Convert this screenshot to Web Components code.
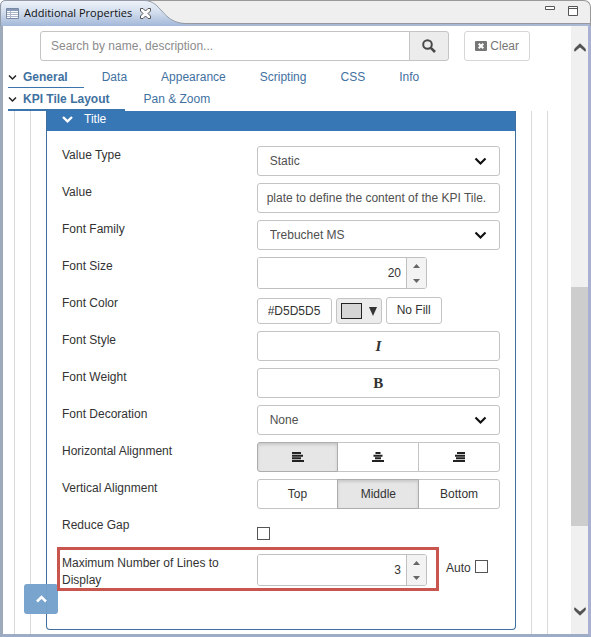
<!DOCTYPE html>
<html lang="en">
<head>
<meta charset="utf-8">
<title>Additional Properties</title>
<style>
  body { margin: 0; font: 12px/17px "Liberation Sans", Arial, sans-serif; color: #333; background: #fff; }
</style>
</head>
<body>
<view-frame heading="Additional Properties">
  <search-bar></search-bar>
  <tab-row tabs="General,Data,Appearance,Scripting,CSS,Info"></tab-row>
  <tab-row class="sub" tabs="KPI Tile Layout,Pan &amp; Zoom"></tab-row>
  <nested-guides>
    <prop-panel heading="Title">
      <select-field label="Value Type" value="Static"></select-field>
      <text-field label="Value" value="plate to define the content of the KPI Tile."></text-field>
      <select-field label="Font Family" value="Trebuchet MS"></select-field>
      <number-field label="Font Size" value="20"></number-field>
      <color-field label="Font Color" value="#D5D5D5"></color-field>
      <toggle-field label="Font Style" value="I" kind="italic"></toggle-field>
      <toggle-field label="Font Weight" value="B" kind="bold"></toggle-field>
      <select-field label="Font Decoration" value="None"></select-field>
      <segment-field label="Horizontal Alignment" icons options="Left,Center,Right" selected="0"></segment-field>
      <segment-field label="Vertical Alignment" options="Top,Middle,Bottom" selected="1"></segment-field>
      <check-field label="Reduce Gap"></check-field>
      <number-field label="Maximum Number of Lines to Display" value="3" auto marked></number-field>
    </prop-panel>
  </nested-guides>
</view-frame>

<script>
const RESET = `
  *, *::before, *::after { box-sizing: border-box; }
  button, input, select { font: inherit; color: inherit; margin: 0; border-radius: 3px; border: 1px solid #c4c4c4; background: #fff; padding: 0; min-width: 0; }
  svg { display: block; flex: none; }
  [hidden] { display: none; }
`;
class Base extends HTMLElement {
  connectedCallback() {
    this.attachShadow({ mode: "open" }).innerHTML = `<style>${RESET}${this.css()}</style>${this.html()}`;
  }
  attr(n) { return (this.getAttribute(n) || "").replace(/&/g, "&amp;"); }
}

customElements.define("view-frame", class extends Base {
  css() { return `
    :host { display: flex; flex-direction: column; min-height: 100vh; background: #fff; }
    header { display: flex; justify-content: space-between; height: 26px; background: #efefef; border: 1px solid #999; border-bottom: 0; border-radius: 6px 7px 0 0; box-shadow: inset 0 -2px #a9b9d3, inset 0 -3px #97989e; }
    .tab { position: relative; display: flex; align-items: center; padding: 0 32px 1px 5px; }
    .tab > .shape { position: absolute; left: -1px; top: -1px; }
    .tab > :not(.shape) { position: relative; }
    h1 { margin: 0 8px 0 5px; font: 11px/18px "Open Sans", "Noto Sans", sans-serif; color: #111; }
    .tab button, .win button { border: 0; background: none; }
    .win { display: flex; align-items: flex-start; gap: 13px; padding: 5px 12px 0 0; }
    .main { flex: 1; display: flex; border: solid; border-width: 0 3px 3px 3px; border-color: #9facc4 #a9b0d2 #9dacc6 #9caab9; }
    .content { position: relative; flex: 1; min-width: 0; display: flex; flex-direction: column; padding: 5px 0 0; }
    nav { width: 17px; flex: none; display: flex; flex-direction: column; align-items: stretch; background: #f0f0f0; padding: 15px 0 16px; }
    nav button { display: flex; justify-content: center; padding: 2px 0; border: 0; background: none; }
    .before { flex: 232; } .thumb { flex: 237; background: #cdcdcd; } .after { flex: 79; }
    .top { position: absolute; z-index: 1; left: 21px; bottom: 20px; width: 34px; height: 30px; display: grid; place-items: center; border: 0; background: #75a2cd; opacity: .97; }
  `; }
  html() { return `
    <header>
      <div class="tab">
        <svg class="shape" width="190" height="26" viewBox="0 0 190 26">
          <defs><linearGradient id="g" x2="0" y2="1"><stop offset="0" stop-color="#f0f4fa"/><stop offset=".5" stop-color="#cfdbec"/><stop offset="1" stop-color="#a2b7d8"/></linearGradient></defs>
          <path d="M.5 26V6Q.5.5 6 .5H144C162 .5 162 23.500 186 23.500V26Z" fill="url(#g)"/>
          <path d="M.5 26V6Q.5.5 6 .5H144C162 .5 162 23.500 186 23.500" fill="none" stroke="#929aa8"/>
        </svg>
        <svg width="13" height="11" viewBox="0 0 13 11"><path d="M.5.5h12v10h-12z" fill="#fff" stroke="#7688a5"/><path d="M1 1h11v2H1z" fill="#8799b5"/><path d="M1 4.500h11M1 6.500h11M1 8.500h11M4.500 3v7" stroke="#a9b6cb"/></svg>
        <h1>${this.attr("heading")}</h1>
        <button aria-label="Close view"><svg width="11" height="11" viewBox="0 0 11 11"><path d="M.5.5h2.500l2.500 2.500L8 .5h2.500V3L8 5.500 10.500 8v2.500H8L5.500 8 3 10.500H.5V8L3 5.500.5 3z" fill="#fff" stroke="#555"/></svg></button>
      </div>
      <div class="win">
        <button aria-label="Minimize"><svg width="10" height="4"><path d="M.5.5h9v3h-9z" fill="#fff" stroke="#555"/></svg></button>
        <button aria-label="Maximize"><svg width="10" height="10"><path d="M.5.5h9v9h-9zM.5 2.500h9" fill="#fff" stroke="#555"/></svg></button>
      </div>
    </header>
    <div class="main">
      <div class="content"><slot></slot>
        <button class="top" aria-label="Scroll to top"><svg width="11" height="8" viewBox="0 0 11 8"><path d="M1 6.500l4.500-4.500L10 6.500" fill="none" stroke="#fff" stroke-width="2.500"/></svg></button>
      </div>
      <nav aria-label="Scroll">
        <button aria-label="Scroll up"><svg width="12" height="9" viewBox="0 0 12 9"><path d="M.8 8.200V5.800L6 .8l5.200 5v2.400L6 3.800z" fill="#505050" stroke="#505050"/></svg></button>
        <span class="before"></span><span class="thumb"></span><span class="after"></span>
        <button aria-label="Scroll down"><svg width="12" height="9" viewBox="0 0 12 9"><path d="M.8 .8v2.400l5.200 5 5.200-5V.8L6 5.200z" fill="#505050" stroke="#505050"/></svg></button>
      </nav>
    </div>`; }
});

customElements.define("search-bar", class extends Base {
  css() { return `
    :host { display: flex; gap: 15px; padding: 0 41px 5px 37px; }
    .group { flex: 1; display: flex; min-width: 0; }
    input { flex: 1; height: 30px; padding: 0 10px; border-radius: 3px 0 0 3px; }
    input::placeholder { color: #8c8c8c; opacity: 1; }
    .go { width: 40px; height: 30px; margin-left: -1px; display: grid; place-items: center; background: #ececec; border-radius: 0 3px 3px 0; }
    .clear { height: 30px; display: flex; align-items: center; gap: 3px; padding: 0 10px; border-color: #d6d6d6; color: #777; }
  `; }
  html() { return `
    <div class="group">
      <input type="search" aria-label="Search properties" placeholder="Search by name, description...">
      <button class="go" aria-label="Search"><svg width="14" height="14" viewBox="0 0 14 14" fill="none" stroke="#484848"><circle cx="5.500" cy="5.500" r="4.300" stroke-width="2"/><path d="M8.800 8.800l4.200 4.200" stroke-width="2.600"/></svg></button>
    </div>
    <button class="clear"><svg width="12" height="10" viewBox="0 0 12 10"><rect width="12" height="10" rx="1" fill="#777"/><path d="M3.700 2.700l4.600 4.600M8.300 2.700L3.700 7.300" stroke="#fff" stroke-width="2"/></svg>Clear</button>`; }
});

customElements.define("tab-row", class extends Base {
  css() { return `
    :host { display: flex; gap: 18px; padding-left: 5px; }
    a { height: 22px; padding: 3px 16px 0 0; color: #3f719f; text-decoration: none; white-space: nowrap; }
    a.on { display: flex; gap: 6px; font-weight: bold; border-bottom: 1px solid #3a76ad; }
    a.on svg { margin-top: 5px; }
    :host(.sub) a { height: 23px; }
    :host(.sub) a.on { border-bottom-width: 2px; }
  `; }
  html() { return this.attr("tabs").split(",").map((t, i) => i
    ? `<a href="#">${t}</a>`
    : `<a href="#" class="on"><svg width="9" height="7" viewBox="0 0 9 7"><path d="M1 1.500l3.500 3.500L8 1.500" fill="none" stroke="#222" stroke-width="1.500"/></svg>${t}</a>`).join(""); }
});

customElements.define("nested-guides", class extends Base {
  css() { return `
    :host { flex: 1; display: flex; padding: 0 23px 0 11px; }
    div { flex: 1; min-width: 0; display: flex; padding: 0 15px; border: solid #d9d9d9; border-width: 0 1px; }
    .inner { padding-bottom: 4px; }
  `; }
  html() { return `<div><div class="inner"><slot></slot></div></div>`; }
});

customElements.define("prop-panel", class extends Base {
  css() { return `
    :host { flex: 1; min-width: 0; display: flex; flex-direction: column; border: 1px solid #3f6f9c; border-top: 0; border-radius: 0 0 4px 4px; }
    h2 { margin: 0; height: 20px; display: flex; align-items: center; gap: 11px; padding: 0 15px 3px; background: #3777b5; color: #fff; font: inherit; }
    section { padding: 15px 15px 39px; }
  `; }
  html() { return `
    <h2><svg width="11" height="7" viewBox="0 0 11 7"><path d="M1 1l4.500 4.300L10 1" fill="none" stroke="#fff" stroke-width="2.400"/></svg>${this.attr("heading")}</h2>
    <section><slot></slot></section>`; }
});

class Field extends Base {
  css() { return `
    :host { position: relative; display: grid; grid-template-columns: minmax(0, 4fr) minmax(0, 5fr); min-height: 37px; align-items: start; }
    .label { padding: 1px 24px 0 0; }
    .box { width: 100%; height: 30px; }
    ${this.style_()}
  `; }
  style_() { return ""; }
  html() { return `<label class="label" for="c">${this.attr("label")}</label>${this.control()}`; }
}

customElements.define("text-field", class extends Field {
  style_() { return `input { padding: 0 9px; color: #505050; }`; }
  control() { return `<input id="c" class="box" type="text" value="${this.attr("value")}">`; }
});

customElements.define("select-field", class extends Field {
  style_() { return `
    .wrap { display: grid; align-items: center; }
    .wrap > * { grid-area: 1 / 1; }
    select { appearance: none; padding: 0 12px; color: #505050; }
    svg { justify-self: end; margin-right: 13px; pointer-events: none; }`; }
  control() { return `<div class="wrap"><select id="c" class="box"><option>${this.attr("value")}</option></select>
    <svg width="13" height="9" viewBox="0 0 13 9"><path d="M1.500 1.500l5 5 5-5" fill="none" stroke="#111" stroke-width="2.200"/></svg></div>`; }
});

customElements.define("number-field", class extends Field {
  style_() { return `
    .wrap { display: flex; }
    .spin { width: 70%; flex: none; height: 32px; display: flex; border: 1px solid #c0c0c0; border-radius: 3px; overflow: hidden; }
    input[type=number] { flex: 1; appearance: textfield; text-align: right; border: 0; padding: 0 5px; border-radius: 0; }
    input::-webkit-inner-spin-button { display: none; }
    .btns { width: 20px; display: flex; flex-direction: column; border-left: 1px solid #c0c0c0; background: #f3f3f3; }
    .btns button { flex: 1; display: grid; place-items: center; border: 0; background: none; }
    :host([marked]) .wrap { padding-top: 1px; }
    :host([marked]) .label { padding-top: 2px; }
    .auto { display: flex; gap: 4px; align-items: center; height: 17px; margin: 6px 0 0 19px; }
    .auto input { appearance: none; width: 13px; height: 13px; border: 1px solid #555; border-radius: 0; margin-bottom: 4px; }
    .mark { position: absolute; z-index: 2; left: -5px; top: -6px; right: 14%; height: 44px; border: 3px solid #c8564f; pointer-events: none; }`; }
  control() { return `<div class="wrap"><div class="spin"><input id="c" type="number" value="${this.attr("value")}">
      <div class="btns">
        <button aria-label="Increase"><svg width="7" height="4"><path d="M0 4L3.500 0 7 4z" fill="#666"/></svg></button>
        <button aria-label="Decrease"><svg width="7" height="4"><path d="M0 0L3.500 4 7 0z" fill="#666"/></svg></button>
      </div></div>
      ${this.hasAttribute("auto") ? `<label class="auto">Auto<input type="checkbox"></label>` : ""}</div>
      ${this.hasAttribute("marked") ? `<div class="mark"></div>` : ""}`; }
});

customElements.define("color-field", class extends Field {
  style_() { return `
    .wrap { display: flex; align-items: flex-end; gap: 4px; height: 30px; }
    input { width: 75px; height: 26px; padding: 0 10px; }
    button { height: 27px; padding: 0 10px 1px; }
    .pick { width: 46px; height: 26px; padding: 0 4px; display: flex; align-items: center; justify-content: space-between; background: #ececec; }
    .sw { width: 21px; height: 16px; border: 1px solid #222; background: #d5d5d5; }`; }
  control() { return `<div class="wrap"><input id="c" type="text" value="${this.attr("value")}">
    <button class="pick" aria-label="Pick color"><span class="sw"></span><svg width="8" height="9"><path d="M0 0h8L4 9z" fill="#333"/></svg></button>
    <button>No Fill</button></div>`; }
});

customElements.define("toggle-field", class extends Field {
  style_() { return `
    button { font: bold 15px/20px "Liberation Serif", "Times New Roman", serif; }
    .italic { font-style: italic; }`; }
  control() { return `<button id="c" class="box ${this.attr("kind")}">${this.attr("value")}</button>`; }
});

customElements.define("segment-field", class extends Field {
  style_() { return `
    .wrap { display: flex; }
    button { flex: 1; height: 30px; display: grid; place-items: center; border-radius: 0; }
    button + button { margin-left: -1px; }
    button:first-child { border-radius: 3px 0 0 3px; }
    button:last-child { border-radius: 0 3px 3px 0; }
    .on { position: relative; background: #e6e6e6; border-color: #adadad; box-shadow: inset 0 2px 3px #00000020; }`; }
  html() {
    const art = ["M0 1h9M0 3.700h11M0 6.300h9M0 9h12", "M3.500 1h5M1.500 3.700h9M3 6.300h6M0 9h12", "M4 1h8M2 3.700h10M3 6.300h9M0 9h12"];
    const sel = +this.getAttribute("selected"), icons = this.hasAttribute("icons");
    return `<span class="label" id="l">${this.attr("label")}</span><div class="wrap" role="group" aria-labelledby="l">` +
      this.attr("options").split(",").map((o, i) => `<button class="${i === sel ? "on" : ""}" aria-pressed="${i === sel}" ${icons ? `aria-label="${o}"` : ""}>${
        icons ? `<svg width="12" height="10" viewBox="0 0 12 10"><path d="${art[i]}" stroke="#222" stroke-width="2"/></svg>` : o}</button>`).join("") + `</div>`;
  }
});

customElements.define("check-field", class extends Field {
  style_() { return `input { appearance: none; width: 13px; height: 13px; margin-top: 11px; border: 1px solid #555; border-radius: 0; }`; }
  control() { return `<input id="c" type="checkbox">`; }
});
</script>
</body>
</html>
